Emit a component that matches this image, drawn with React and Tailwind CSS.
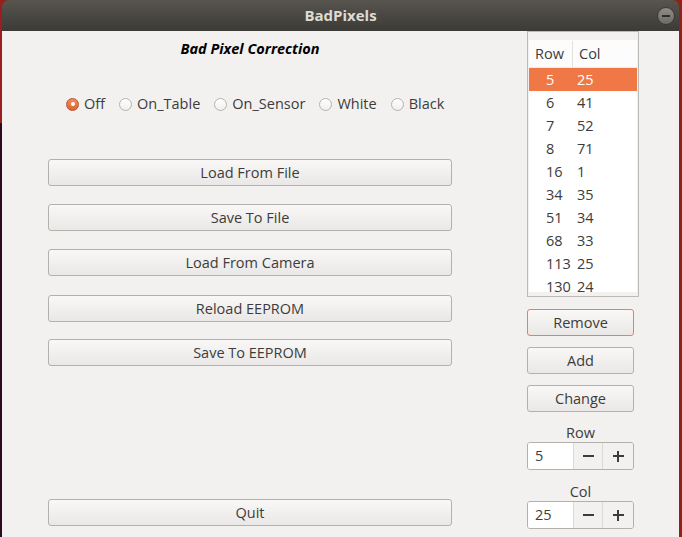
import React from "react";

const rows = [
  [5, 25],
  [6, 41],
  [7, 52],
  [8, 71],
  [16, 1],
  [34, 35],
  [51, 34],
  [68, 33],
  [113, 25],
  [130, 24],
];

const modes = ["Off", "On_Table", "On_Sensor", "White", "Black"];

function Radio({ label, checked }) {
  return (
    <label className="flex items-center gap-[5px]">
      {checked ? (
        <span className="flex h-[13px] w-[13px] items-center justify-center rounded-full border border-[#b8542a] bg-gradient-to-b from-[#f48a5a] to-[#de6431]">
          <span className="h-[4px] w-[4px] rounded-full bg-white" />
        </span>
      ) : (
        <span className="h-[13px] w-[13px] rounded-full border border-[#b5b3ae] bg-gradient-to-b from-white to-[#f0efed]" />
      )}
      <span>{label}</span>
    </label>
  );
}

function Button({ children, focused, className = "" }) {
  return (
    <div
      className={`flex h-[27px] items-center justify-center rounded-[3px] border bg-gradient-to-b from-[#f9f8f7] to-[#eae8e6] text-[#3c3c3c] ${
        focused ? "border-[#e0845c]" : "border-[#b4b1ac]"
      } ${className}`}
    >
      {children}
    </div>
  );
}

function Spin({ value }) {
  return (
    <div className="flex h-[28px] w-[107px] overflow-hidden rounded-[3px] border border-[#b4b1ac]">
      <div className="flex w-[45px] items-center bg-white pl-[7px] text-[#3c3c3c]">{value}</div>
      <div className="flex w-[29px] items-center justify-center border-l border-[#dcdad6] bg-[#f2f1f0]">
        <span className="h-[2px] w-[11px] bg-[#3c3c3c]" />
      </div>
      <div className="relative flex flex-1 items-center justify-center border-l border-[#dcdad6] bg-[#f2f1f0]">
        <span className="h-[2px] w-[11px] bg-[#3c3c3c]" />
        <span className="absolute h-[11px] w-[2px] bg-[#3c3c3c]" />
      </div>
    </div>
  );
}

export default function App() {
  return (
    <div
      className="flex h-[537px] w-[682px] overflow-hidden bg-[#8e2417] text-[14.5px] text-[#3c3c3c]"
      style={{ fontFamily: '"Open Sans", "DejaVu Sans", sans-serif' }}
    >
      <div className="flex w-[2px] flex-col">
        <div className="h-[123px] bg-[#9c1f1f]" />
        <div className="flex-1 bg-[#2a0b1f]" />
      </div>

      <div className="flex w-[677px] flex-col">
        <div className="relative flex h-[31px] items-center justify-center rounded-t-[7px] bg-gradient-to-b from-[#58554f] to-[#3c3b37]">
          <span className="text-[15px] font-bold text-[#dfdbd2]">BadPixels</span>
          <span className="absolute right-[4px] top-[7px] flex h-[18px] w-[18px] items-center justify-center rounded-full border border-[#3a3935] bg-gradient-to-b from-[#8f8c86] to-[#6d6b66]">
            <span className="h-[1.5px] w-[8px] bg-[#2e2d2a]" />
          </span>
        </div>

        <div className="flex flex-1 bg-[#f2f1f0] pl-[46px]">
          <div className="flex w-[404px] flex-col">
            <div className="mt-[9px] h-[18px] text-center text-[14.5px] font-bold italic leading-[18px] text-black">
              Bad Pixel Correction
            </div>
            <div className="ml-[18px] mt-[37px] flex h-[18px] items-center gap-[14px]">
              {modes.map((m, i) => (
                <Radio key={m} label={m} checked={i === 0} />
              ))}
            </div>
            <div className="mt-[46px] flex flex-col gap-[18px]">
              <Button>Load From File</Button>
              <Button>Save To File</Button>
              <Button>Load From Camera</Button>
              <Button className="translate-y-px">Reload EEPROM</Button>
              <Button>Save To EEPROM</Button>
            </div>
            <Button className="mt-[133px]">Quit</Button>
          </div>

          <div className="ml-[75px] flex w-[112px] flex-col">
            <div className="flex h-[266px] flex-col border border-[#bdbab5] bg-[#f2f1f0] px-px pb-[4px] pt-[8px]">
              <div className="flex h-[28px] items-center border-b border-[#ebeae8] bg-[#fcfcfc] pt-px">
                <div className="flex h-full w-[44px] items-center border-r border-[#e3e2df] pl-[6px]">Row</div>
                <div className="pl-[6px]">Col</div>
              </div>
              <div className="flex-1 overflow-hidden bg-white">
                {rows.map(([r, c], i) => (
                  <div
                    key={r}
                    className={`flex h-[23px] items-center pt-px ${
                      i === 0 ? "bg-[#f07746] text-white" : ""
                    }`}
                  >
                    <div className="w-[45px] pl-[17px]">{r}</div>
                    <div className="pl-[3px]">{c}</div>
                  </div>
                ))}
              </div>
            </div>

            <div className="flex w-[107px] flex-col">
              <Button focused className="mt-[12px]">Remove</Button>
              <Button className="mt-[11px]">Add</Button>
              <Button className="mt-[11px]">Change</Button>
              <div className="mt-[13px] h-[16px] text-center leading-[16px]">Row</div>
              <div className="mt-px">
                <Spin value="5" />
              </div>
              <div className="mt-[14px] h-[16px] text-center leading-[16px]">Col</div>
              <div className="mt-px">
                <Spin value="25" />
              </div>
            </div>
          </div>
        </div>
      </div>
    </div>
  );
}
